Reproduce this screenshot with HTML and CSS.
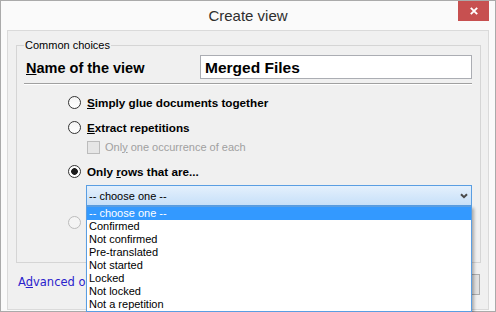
FILE: index.html
```html
<!DOCTYPE html>
<html lang="en">
<head>
<meta charset="utf-8">
<title>Create view</title>
<link rel="stylesheet" href="styles.css">
</head>
<body>
<div class="window">
  <div class="titlebar">
    <span class="spacer"></span>
    <div class="title">Create view</div>
    <button class="close" aria-label="Close">
      <svg width="8" height="8" viewBox="0 0 8 8"><path d="M0.8 0.8L7.2 7.2M7.2 0.8L0.8 7.2" stroke="#fff" stroke-width="1.9" fill="none"/></svg>
    </button>
  </div>
  <div class="client">
    <fieldset class="group">
      <legend>Common choices</legend>
      <div class="name-row">
        <label class="name-label" for="viewname"><u>N</u>ame of the view</label>
        <input id="viewname" class="name-input" type="text" value="Merged Files">
      </div>
      <div class="sep"></div>
      <div class="opt first"><span class="radio"></span><span class="opt-text"><u>S</u>imply glue documents together</span></div>
      <div class="opt"><span class="radio"></span><span class="opt-text"><u>E</u>xtract repetitions</span></div>
      <div class="sub disabled"><span class="check"></span><span>Onl<u>y</u> one occurrence of each</span></div>
      <div class="opt"><span class="radio checked"></span><span class="opt-text">Only <u>r</u>ows that are...</span></div>
      <div class="combo">
        <span class="combo-text">-- choose one --</span>
        <svg class="chev" width="8" height="6" viewBox="0 0 8 6"><path d="M1 1.2L4 4.2L7 1.2" stroke="#4a4a4a" stroke-width="2" fill="none"/></svg>
        <ul class="listbox">
          <li class="selected">-- choose one --</li>
          <li>Confirmed</li>
          <li>Not confirmed</li>
          <li>Pre-translated</li>
          <li>Not started</li>
          <li>Locked</li>
          <li>Not locked</li>
          <li>Not a repetition</li>
        </ul>
      </div>
      <div class="opt disabled"><span class="radio"></span></div>
    </fieldset>
    <div class="footer">
      <a class="link" href="#">A<u>d</u>vanced options</a>
      <div class="buttons"><button class="btn" aria-label="OK"></button><button class="btn" aria-label="Cancel"></button></div>
    </div>
  </div>
</div>
</body>
</html>
```
FILE: styles.css
```css
* { box-sizing: border-box; }
html, body { margin: 0; padding: 0; }
body {
  width: 496px;
  height: 312px;
  overflow: hidden;
  background: #fafafa;
  font-family: "Liberation Sans", Arial, sans-serif;
}
.window {
  width: 496px;
  height: 312px;
  border: 1px solid #aaaaaa;
  background: #fafafa;
  display: flex;
  flex-direction: column;
}
.titlebar {
  height: 29px;
  flex: none;
  display: grid;
  grid-template-columns: 1fr auto 1fr;
  padding: 0 6px;
}
.title {
  font-size: 15px;
  line-height: 29px;
  color: #2e2e2e;
}
.close {
  justify-self: end;
  align-self: start;
  width: 31px;
  height: 20px;
  border: 0;
  padding: 0;
  background: #c75050;
  display: flex;
  align-items: center;
  justify-content: center;
}
.close svg { display: block; }
.client {
  flex: 1;
  margin: 0 6px 1px;
  border: 1px solid #dadada;
  background: #f0f0f0;
  padding: 0 7px 0 8px;
  display: flex;
  flex-direction: column;
}
.group {
  margin: 7px 0 0;
  padding: 0 0 31px;
  border: 1px solid #d5d5d5;
  min-width: 0;
}
.group legend {
  font-size: 11px;
  line-height: 15px;
  padding: 0 1px;
  margin-left: 7px;
  color: #000;
}
.name-row {
  margin-top: 2px;
  padding: 0 8px 0 9px;
  display: flex;
  align-items: center;
  height: 24px;
}
.name-label {
  width: 174px;
  flex: none;
  font-weight: bold;
  font-size: 14.5px;
  color: #000;
  position: relative;
  top: 1px;
}
.name-input {
  flex: 1;
  min-width: 0;
  height: 24px;
  margin: 0;
  border: 1px solid #abadb3;
  background: #fff;
  padding: 1px 4px 0;
  font-family: "Liberation Sans", Arial, sans-serif;
  font-weight: bold;
  font-size: 15.5px;
  color: #000;
  outline: none;
}
.sep {
  margin: 4px 8px 0 7px;
  height: 2px;
  border-top: 1px solid #a0a0a0;
  border-bottom: 1px solid #ffffff;
}
.opt {
  height: 17px;
  margin: 8px 0 0 51px;
  display: flex;
  align-items: center;
}
.opt.first { margin-top: 9px; }
.radio {
  width: 13px;
  height: 13px;
  flex: none;
  border: 1px solid #333;
  border-radius: 50%;
  background: linear-gradient(#f4f4f4, #ffffff);
  margin-right: 6px;
}
.radio.checked {
  background: radial-gradient(circle at center, #1c1c1c 0, #1c1c1c 3px, #ffffff 3.7px);
}
.opt-text {
  font-weight: bold;
  font-size: 11.7px;
  color: #000;
}
.opt.disabled .radio {
  border-color: #bcbcbc;
  background: #f4f4f4;
}
.sub {
  height: 17px;
  margin: 2px 0 0 70px;
  display: flex;
  align-items: center;
  font-size: 11px;
}
.check {
  width: 13px;
  height: 13px;
  flex: none;
  border: 1px solid #bcbcbc;
  background: #e6e6e6;
  margin-right: 5px;
  position: relative;
  top: 1px;
}
.sub.disabled { color: #a0a0a0; }
.combo {
  position: relative;
  height: 21px;
  margin: 5px 8px 0 69px;
  border: 1px solid #5a9ee2;
  background: linear-gradient(#e4f0fc, #c7e0f9);
  padding: 0 3px 0 2px;
  display: flex;
  align-items: center;
  justify-content: space-between;
  font-size: 11px;
  color: #000;
}
.chev { display: block; }
.listbox {
  position: absolute;
  top: 20px;
  left: -1px;
  right: -1px;
  margin: 0;
  padding: 0;
  list-style: none;
  background: #fff;
  border: 1px solid #5a9ee2;
  box-shadow: 2px 2px 3px rgba(0, 0, 0, 0.3);
  z-index: 10;
}
.listbox li {
  height: 13px;
  line-height: 13px;
  padding-left: 2px;
  font-size: 11px;
  color: #000;
  white-space: nowrap;
}
.listbox li.selected {
  background: #3399ff;
  color: #fff;
}
.footer {
  margin-top: 11px;
  height: 21px;
  padding: 0 1px 0 2px;
  display: flex;
  align-items: center;
  justify-content: space-between;
}
.link {
  font-family: "DejaVu Sans", Verdana, sans-serif;
  font-size: 11.5px;
  color: #2a22cc;
  text-decoration: none;
  margin-bottom: 5px;
  white-space: nowrap;
}
.buttons {
  display: flex;
  gap: 6px;
}
.btn {
  width: 75px;
  height: 21px;
  border: 1px solid #adadad;
  background: #e1e1e1;
  padding: 0;
}
```
